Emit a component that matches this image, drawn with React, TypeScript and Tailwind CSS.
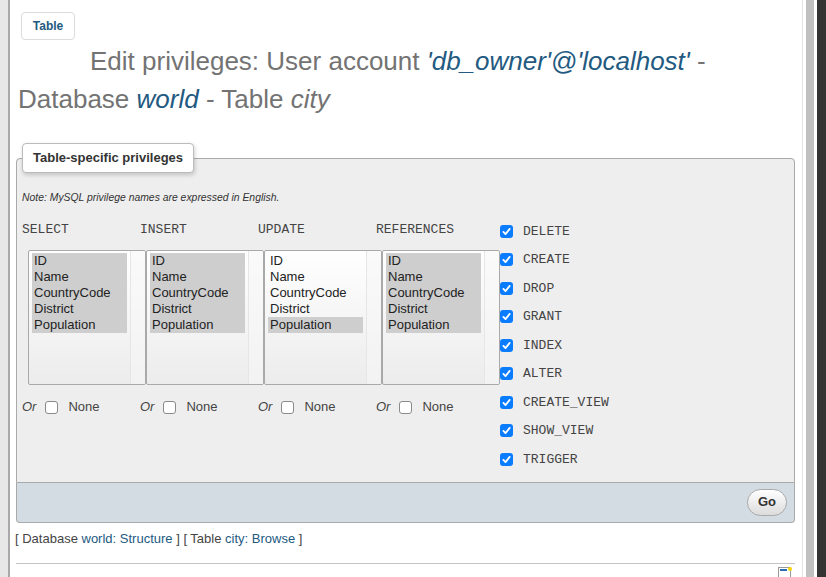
import React from "react";

const columns = ["SELECT", "INSERT", "UPDATE", "REFERENCES"];
const fields = ["ID", "Name", "CountryCode", "District", "Population"];
const selected: boolean[][] = [
  [true, true, true, true, true],
  [true, true, true, true, true],
  [false, false, false, false, true],
  [true, true, true, true, true],
];
const privileges = ["DELETE", "CREATE", "DROP", "GRANT", "INDEX", "ALTER", "CREATE_VIEW", "SHOW_VIEW", "TRIGGER"];

function CheckedBox() {
  return (
    <span className="flex h-[13px] w-[13px] shrink-0 items-center justify-center rounded-[3px] bg-[#0a7cff]">
      <svg width="13" height="13" viewBox="0 0 13 13" aria-hidden="true">
        <path d="M3.4 6.9 L5.5 9.1 L9.7 3.9" fill="none" stroke="white" strokeWidth="1.8" strokeLinecap="round" strokeLinejoin="round" />
      </svg>
    </span>
  );
}

function ColumnSelect({ marks }: { marks: boolean[] }) {
  return (
    <div className="flex h-[135px] w-[118px] shrink-0 rounded-[2px] border border-[#a9a9a9] bg-gradient-to-b from-white to-[#ececec]">
      <div className="ml-[3px] mt-[2px] w-[95px]">
        {fields.map((f, i) => (
          <div key={f} className={`h-[16px] pl-[2px] text-[13px] leading-[16px] text-[#222] ${marks[i] ? "bg-[#cecece]" : ""}`}>
            {f}
          </div>
        ))}
      </div>
      <div className="ml-auto w-[15px] border-l border-[#e6e6e6] bg-[#f6f6f6]/60" />
    </div>
  );
}

export default function App() {
  return (
    <div className="flex h-[577px] w-[826px] overflow-hidden bg-white font-['Liberation_Sans',Arial,sans-serif] text-[#444]">
      <div className="w-2 shrink-0 bg-[#e7e7e7]" />
      <div className="w-[2px] shrink-0 bg-[#a9a9a9]" />

      <main className="w-[792px] shrink-0 pt-[12px]">
        <div className="ml-[11px] flex h-[28px] w-[54px] items-center justify-center rounded-[4px] border border-[#dcdcdc] text-[12px] font-bold text-[#235a81]">
          Table
        </div>

        <h2 className="ml-[8px] pt-[2px] indent-[72px] text-[26px] leading-[38px] text-[#737373]">
          Edit privileges: User account <i className="text-[#235a81]">'db_owner'@'localhost'</i> -
          <br />
          Database <i className="text-[#235a81]">world</i> - Table <i>city</i>
        </h2>

        <fieldset className="ml-[6px] mt-[25px] w-[779px] rounded-t-[4px] border border-[#aaa] bg-[#eee] pb-[8px] pl-[5px]">
          <legend className="h-[30px] rounded-[4px] border border-[#bbb] bg-white px-[10px] text-[13px] font-bold leading-[28px] text-[#333] shadow-[1px_2px_4px_rgba(0,0,0,0.18)]">
            Table-specific privileges
          </legend>

          <p className="mt-[18px] text-[10.4px] italic leading-[13px] text-[#333]">
            Note: MySQL privilege names are expressed in English.
          </p>

          <div className="mt-[13px] flex">
            <div className="w-[478px] pt-[5px]">
              <div className="grid grid-cols-[repeat(4,118px)] font-['Liberation_Mono','Courier_New',monospace] text-[13px] leading-[16px] text-[#444]">
                {columns.map((c) => (
                  <div key={c}>{c}</div>
                ))}
              </div>
              <div className="ml-[6px] mt-[12px] flex">
                {selected.map((m, i) => (
                  <ColumnSelect key={columns[i]} marks={m} />
                ))}
              </div>
              <div className="mt-[11px] grid grid-cols-[repeat(4,118px)] text-[13px]">
                {columns.map((c) => (
                  <div key={c} className="flex h-[22px] items-center">
                    <i>Or</i>
                    <span className="ml-[9px] h-[13px] w-[13px] rounded-[3px] border border-[#8a8a8a] bg-white" />
                    <span className="ml-[10px]">None</span>
                  </div>
                ))}
              </div>
            </div>

            <div className="flex flex-col">
              {privileges.map((p) => (
                <div key={p} className="flex h-[28.5px] items-center gap-[10px]">
                  <CheckedBox />
                  <span className="font-['Liberation_Mono','Courier_New',monospace] text-[13px] text-[#444]">{p}</span>
                </div>
              ))}
            </div>
          </div>
        </fieldset>

        <div className="ml-[6px] flex h-[40px] w-[779px] items-center justify-end rounded-b-[4px] border border-t-0 border-[#aaa] bg-[#d3dce3] pr-[7px]">
          <button className="h-[27px] w-[40px] rounded-full border border-[#aaa] bg-gradient-to-b from-white to-[#dcdcdc] text-[13px] font-bold text-[#333]">
            Go
          </button>
        </div>

        <div className="ml-[5px] mt-[8px] text-[13px] leading-[16px]">
          [ Database <span className="text-[#235a81]">world: Structure</span> ] [ Table{" "}
          <span className="text-[#235a81]">city: Browse</span> ]
        </div>

        <hr className="ml-[6px] mt-[16px] w-[779px] border-t border-[#c4c4c4]" />

        <div className="mr-[10px] mt-[3px] flex justify-end">
          <svg width="14" height="14" viewBox="0 0 14 14" aria-hidden="true">
            <rect x="0.5" y="0.5" width="12" height="13" fill="white" stroke="#9a9a9a" />
            <rect x="2" y="2" width="7" height="2" fill="#2d6db5" />
            <circle cx="12" cy="2" r="2" fill="#f5d400" />
          </svg>
        </div>
      </main>

      <div className="w-px shrink-0 bg-[#e2e2e2]" />
      <div className="w-[3px] shrink-0 bg-white" />
      <div className="w-2 shrink-0 bg-[#c0c0c0]" />
      <div className="w-[3px] shrink-0 bg-white" />
      <div className="flex-1 bg-[#333]" />
    </div>
  );
}
